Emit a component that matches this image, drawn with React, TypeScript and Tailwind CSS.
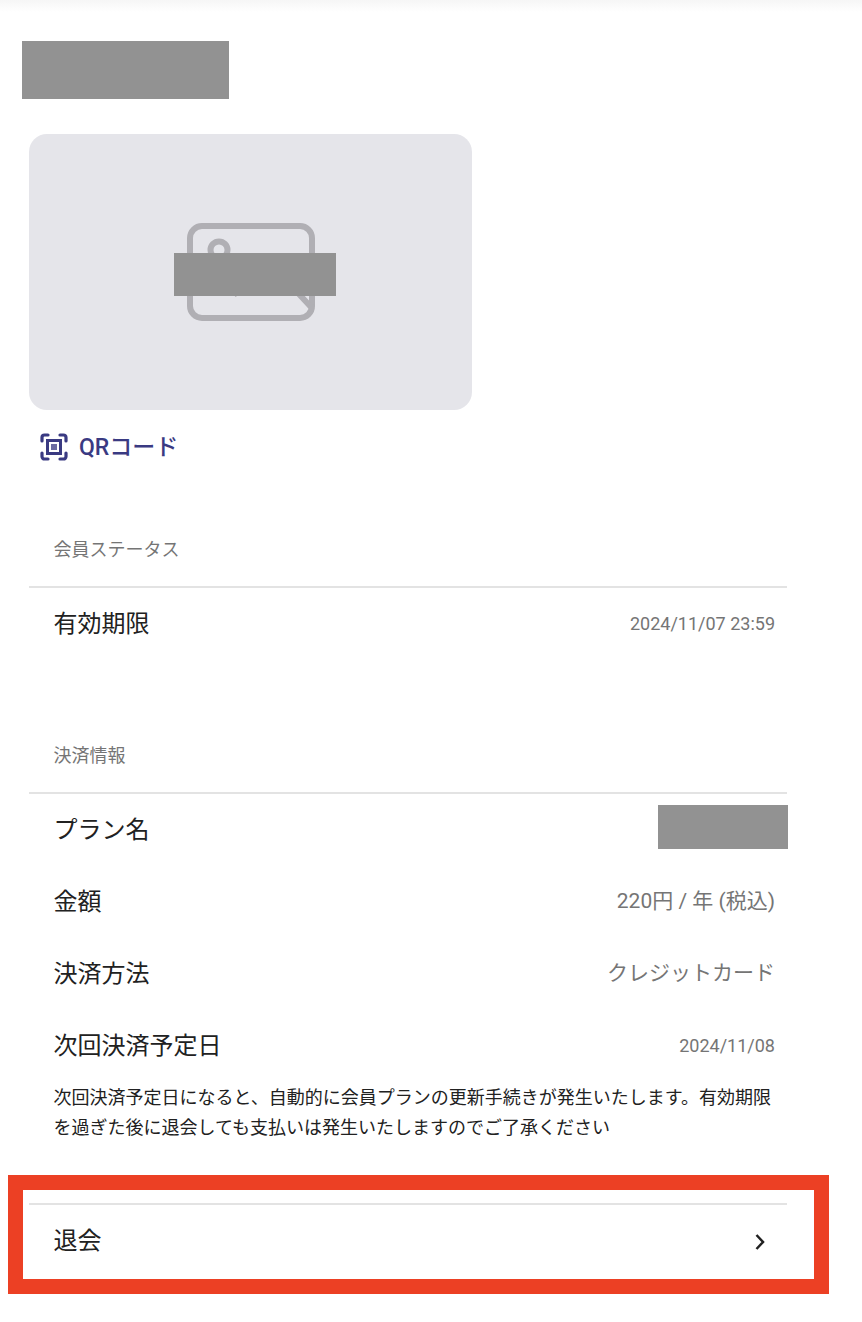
const font = "font-['Roboto','Noto_Sans_CJK_JP',sans-serif]";

function InfoRow({ label, children }: { label: string; children: React.ReactNode }) {
  return (
    <div className="flex h-[72px] items-center justify-between pl-[24.5px] pr-[12px]">
      <span className="text-[24px] leading-none text-[#212121]">{label}</span>
      {children}
    </div>
  );
}

function SectionTitle({ title }: { title: string }) {
  return (
    <div className="flex h-[63px] items-center border-b-2 border-[#e3e3e3] pb-[11px] pl-[24.5px] text-[18px] leading-none text-[#757575]">
      {title}
    </div>
  );
}

export default function App() {
  return (
    <div className={`${font} h-[1322px] w-[862px] overflow-hidden bg-white`}>
      <div className="h-[12px] bg-gradient-to-b from-[#f6f6f6] to-white" />

      <div className="ml-[22px] mt-[29px] h-[58px] w-[207px] bg-[#929292]" />

      <div className="relative ml-[29px] mt-[35px] flex h-[276px] w-[443px] items-center justify-center rounded-[18px] bg-[#e5e5ea]">
        <svg width="128" height="98" viewBox="0 0 128 98" fill="none" stroke="#b0afb4" strokeWidth="6">
          <rect x="3" y="3" width="122" height="92" rx="12" />
          <circle cx="32" cy="27" r="8.500" />
          <path d="M30 50 L49 70 L85 42 L124 84" />
        </svg>
        <div className="absolute left-[145px] top-[119px] h-[43px] w-[162px] bg-[#929292]" />
      </div>

      <div className="ml-[40px] mt-[23px] flex h-[28px] items-center gap-[11px] text-[23px] font-medium leading-none text-[#3a3a82]">
        <svg width="28" height="28" viewBox="0 0 28 28" fill="none" stroke="currentColor" strokeWidth="3.200" strokeLinecap="round">
          <path d="M2 8V4.500A2.500 2.500 0 0 1 4.500 2H8" />
          <path d="M20 2h3.500A2.500 2.500 0 0 1 26 4.500V8" />
          <path d="M26 20v3.500a2.500 2.500 0 0 1-2.500 2.500H20" />
          <path d="M8 26H4.500A2.500 2.500 0 0 1 2 23.500V20" />
          <rect x="7.500" y="7.500" width="13" height="13" strokeWidth="3" strokeLinecap="butt" />
          <rect x="11" y="11" width="6" height="6" fill="currentColor" fillOpacity="0.75" stroke="none" />
        </svg>
        <span>QRコード</span>
      </div>

      <div className="ml-[29px] mt-[64px] w-[758px]">
        <SectionTitle title="会員ステータス" />
        <InfoRow label="有効期限">
          <span className="mb-[2px] text-[18px] text-[#757575]">2024/11/07 23:59</span>
        </InfoRow>

        <div className="mt-[71px]">
          <SectionTitle title="決済情報" />
        </div>
        <InfoRow label="プラン名">
          <div className="-mr-[13px] mb-[6px] h-[44px] w-[130px] bg-[#929292]" />
        </InfoRow>
        <InfoRow label="金額">
          <span className="text-[21px] text-[#757575]">220円 / 年 (税込)</span>
        </InfoRow>
        <InfoRow label="決済方法">
          <span className="text-[21px] text-[#757575]">クレジットカード</span>
        </InfoRow>
        <InfoRow label="次回決済予定日">
          <span className="mb-[2px] text-[18px] text-[#757575]">2024/11/08</span>
        </InfoRow>
        <p className="pl-[24.5px] pr-[12px] pt-px text-[18px] leading-[30px] text-[#212121]">
          次回決済予定日になると、自動的に会員プランの更新手続きが発生いたします。有効期限を過ぎた後に退会しても支払いは発生いたしますのでご了承ください
        </p>
      </div>

      <div className="ml-[8px] mt-[32px] h-[119px] w-[821px] border-[15px] border-[#ec4024] px-[6px] pt-[13px]">
        <div className="flex h-[76px] w-[758px] items-center justify-between border-t-2 border-[#e3e3e3] pl-[24.5px] pr-[21px]">
          <span className="mb-[2px] text-[24px] leading-none text-[#212121]">退会</span>
          <svg width="12" height="18" viewBox="0 0 12 18" fill="none" stroke="#212121" strokeWidth="2.500">
            <path d="M2.500 2 L9 9 L2.500 16" />
          </svg>
        </div>
      </div>
    </div>
  );
}
